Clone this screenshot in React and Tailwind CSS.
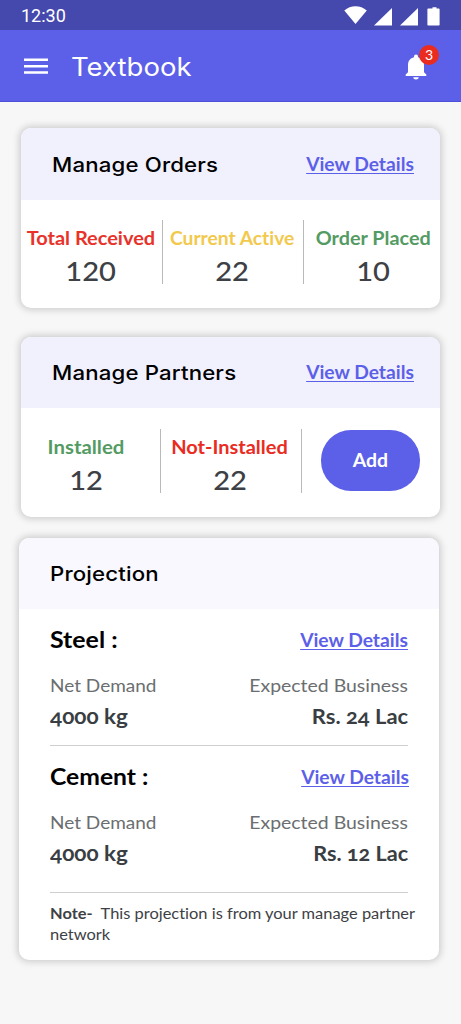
import React from "react";

const Card = ({ className, children }) => (
  <section
    className={`overflow-hidden rounded-[10px] bg-white shadow-[0_0_7px_2px_rgba(0,0,0,0.17)] ${className}`}
  >
    {children}
  </section>
);

const ViewDetails = ({ className = "" }) => (
  <a
    href="#"
    className={`origin-right scale-x-[1.068] border-b border-[#5c60e8] text-[18px] leading-[18px] font-bold whitespace-nowrap text-[#5c60e8] ${className}`}
  >
    View Details
  </a>
);

const CardHeader = ({ title, link, className }) => (
  <header className={`flex items-center justify-between pr-[26px] ${className}`}>
    <h2 className="origin-left scale-x-[1.11] pt-px font-['Inter',sans-serif] text-[20px] font-medium tracking-[0.15px] text-black">
      {title}
    </h2>
    {link && <ViewDetails />}
  </header>
);

const Stat = ({ label, value, className, labelClass }) => (
  <div className={`flex flex-col items-center whitespace-nowrap ${className}`}>
    <div className={`text-[18px] leading-[36px] font-bold ${labelClass}`}>{label}</div>
    <div className="-mt-[2px] scale-x-[1.12] text-[26px] leading-[34px] font-medium text-[#3d4145]">{value}</div>
  </div>
);

const Divider = ({ className = "" }) => <div className={`h-16 w-px shrink-0 bg-[#b9b9b9] ${className}`} />;

const Product = ({ name, nameClass, demand, business, businessClass, linkClass = "" }) => (
  <div>
    <div className="flex h-[62px] items-center justify-between">
      <h3 className={`origin-left text-[23.5px] font-bold text-black ${nameClass}`}>{name}</h3>
      <ViewDetails className={linkClass} />
    </div>
    <div className="flex h-[28px] items-center justify-between text-[18px] text-[#6b6e70]">
      <span className="origin-left scale-x-[1.055]">Net Demand</span>
      <span className="origin-right scale-x-[1.08]">Expected Business</span>
    </div>
    <div className="flex h-[34px] items-center justify-between text-[21px] font-bold text-[#3a3e42] [font-feature-settings:'onum']">
      <span className="origin-left scale-x-[1.07]">{demand}</span>
      <span className={`origin-right ${businessClass}`}>{business}</span>
    </div>
  </div>
);

export default function App() {
  return (
    <div className="flex h-[1024px] w-[461px] flex-col bg-[#f7f7f7] font-['Lato',sans-serif] [font-variant-ligatures:none]">
      <div className="flex h-[30px] items-center justify-between bg-[#4549ad] pr-5 pl-[21px] text-white">
        <span className="pt-px font-['Roboto',sans-serif] text-[18px] leading-none">12:30</span>
        <svg width="98" height="22" viewBox="0 0 98 22" fill="#fff">
          <path d="M1.300 6.500C7.500.8 17.500.8 23.800 6.500L12.500 20Z" />
          <path d="M31 21.500L49 4V21.500Z" />
          <path d="M57 21.500L75 4V21.500Z" />
          <path d="M89.500 3.200h4v1.300h2.300q.8 0 .8.8v15.400q0 .8-.8.8h-10.600q-.8 0-.8-.8V5.300q0-.8.8-.8h4.300Z" />
        </svg>
      </div>
      <div className="flex h-[72px] items-center border-b border-[#4d51da] bg-[#5c60e8] text-white">
        <svg className="ml-6" width="24" height="18" viewBox="0 0 24 18" fill="#fff">
          <path d="M0 1.500h24V4H0zM0 7.900h24v2.500H0zM0 14.300h24v2.500H0z" />
        </svg>
        <h1 className="ml-[23px] origin-left scale-x-[1.1] pt-[4px] font-['Inter',sans-serif] text-[25px] font-normal">
          Textbook
        </h1>
        <div className="relative mr-[34px] ml-auto">
          <svg className="relative top-px" width="22" height="26" viewBox="0 0 22 26" fill="#fff">
            <path d="M11 25.500c1.500 0 2.700-1 2.700-2.300H8.300c0 1.300 1.200 2.300 2.700 2.300zM19 18.300v-7.200c0-3.900-2.200-6.900-6-7.800V2.500a2 2 0 0 0-4 0v.8c-3.800.9-6 3.900-6 7.800v7.200L.7 20.600V22h20.600v-1.400z" />
          </svg>
          <span className="absolute -top-2 left-[14px] flex h-5 w-5 items-center justify-center rounded-full bg-[#ea2b1f] text-[14px] leading-none">
            3
          </span>
        </div>
      </div>

      <Card className="mt-[26px] ml-[21px] h-[180px] w-[419px]">
        <CardHeader title="Manage Orders" link className="h-[72px] bg-[#f1f1fe] pl-[31px]" />
        <div className="flex pt-5">
          <Stat label="Total Received" value="120" className="w-[141px] pr-px" labelClass="scale-x-[1.11] text-[#e8322a]" />
          <Divider />
          <Stat label="Current Active" value="22" className="w-[140px] pr-[2px]" labelClass="scale-x-[1.07] text-[#f2c94c]" />
          <Divider />
          <Stat label="Order Placed" value="10" className="ml-[3px] w-[132px]" labelClass="scale-x-[1.1] text-[#549b63]" />
        </div>
      </Card>

      <Card className="mt-[29px] ml-[21px] h-[180px] w-[419px]">
        <CardHeader title="Manage Partners" link className="h-[71px] bg-[#f1f1fe] pl-[31px]" />
        <div className="flex pt-[21px]">
          <Stat label="Installed" value="12" className="w-[139px] pr-[9px]" labelClass="scale-x-[1.13] text-[#549b63]" />
          <Divider />
          <Stat label="Not-Installed" value="22" className="w-[140px] pr-[2px]" labelClass="scale-x-[1.11] text-[#ea2b1f]" />
          <Divider />
          <button className="mt-px ml-[19px] h-[61px] w-[99px] rounded-[30px] bg-[#5c60e8] text-[18px] font-bold text-white">
            <span className="inline-block scale-x-[1.08]">Add</span>
          </button>
        </div>
      </Card>

      <Card className="mt-[21px] ml-[19px] h-[422px] w-[420px]">
        <CardHeader title="Projection" className="h-[71px] bg-[#f8f8fe] pl-[31px]" />
        <div className="px-[31px]">
          <Product
            name="Steel :"
            nameClass="scale-x-[1.06]"
            demand="4000 kg"
            business="Rs. 24 Lac"
            businessClass="scale-x-[1.045]"
          />
          <div className="mt-[12px] h-px bg-[#cfcfcf]" />
          <Product
            name="Cement :"
            nameClass="scale-x-[1.05]"
            demand="4000 kg"
            business="Rs. 12 Lac"
            businessClass="scale-x-[1.03]"
            linkClass="-mr-px"
          />
          <div className="mt-[22px] h-px bg-[#cfcfcf]" />
          <p className="-mr-3 origin-left scale-x-[1.06] pt-[10px] text-[15.5px] leading-[20.5px] font-normal whitespace-nowrap text-[#3d4145]">
            <b className="mr-1">Note-</b> This projection is from your manage partner
            <br />
            network
          </p>
        </div>
      </Card>
    </div>
  );
}
